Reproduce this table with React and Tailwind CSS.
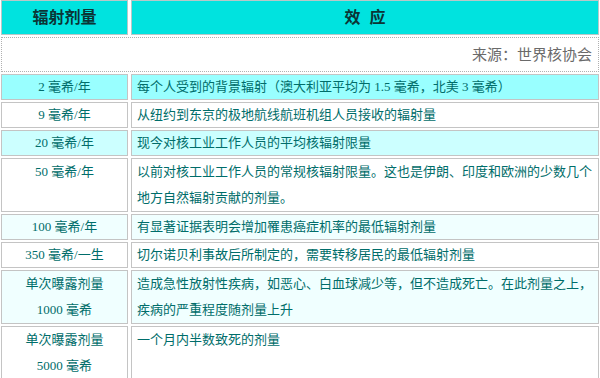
import React from 'react';

const rows = [
  { dose: ['2 毫希/年'], effect: ['每个人受到的背景辐射（澳大利亚平均为 1.5 毫希，北美 3 毫希）'], bg: 'bg-[#99ffff]' },
  { dose: ['9 毫希/年'], effect: ['从纽约到东京的极地航线航班机组人员接收的辐射量'], bg: 'bg-white' },
  { dose: ['20 毫希/年'], effect: ['现今对核工业工作人员的平均核辐射限量'], bg: 'bg-[#ccffff]' },
  {
    dose: ['50 毫希/年'],
    effect: ['以前对核工业工作人员的常规核辐射限量。这也是伊朗、印度和欧洲的少数几个', '地方自然辐射贡献的剂量。'],
    bg: 'bg-white',
  },
  { dose: ['100 毫希/年'], effect: ['有显著证据表明会增加罹患癌症机率的最低辐射剂量'], bg: 'bg-[#f0ffff]' },
  { dose: ['350 毫希/一生'], effect: ['切尔诺贝利事故后所制定的，需要转移居民的最低辐射剂量'], bg: 'bg-white' },
  {
    dose: ['单次曝露剂量', '1000 毫希'],
    effect: ['造成急性放射性疾病，如恶心、白血球减少等，但不造成死亡。在此剂量之上，', '疾病的严重程度随剂量上升'],
    bg: 'bg-[#f0ffff]',
  },
  { dose: ['单次曝露剂量', '5000 毫希'], effect: ['一个月内半数致死的剂量'], bg: 'bg-white' },
];

export default function App() {
  return (
    <div className="w-[600px] h-[378px] overflow-hidden bg-white font-['Liberation_Serif','Noto_Sans_CJK_SC',serif] text-[#006d6a]">
      <table className="-mt-[2px] -ml-[2px] w-[604px] border-separate border-spacing-x-[3px] border-spacing-y-[2px] table-fixed">
        <colgroup>
          <col className="w-[127px]" />
          <col />
        </colgroup>
        <tbody>
          <tr>
            <td className="h-[35px] bg-[#00e3df] border border-[#b8c8c8] text-center text-[16px] font-bold text-[#0b3535]">
              辐射剂量
            </td>
            <td className="h-[35px] bg-[#00e3df] border border-[#b8c8c8] text-center text-[16px] font-bold text-[#0b3535]">
              效<span className="inline-block w-[9px]" />应
            </td>
          </tr>
          <tr>
            <td colSpan={2} className="h-[35px] border border-dotted border-[#b0b0b0] text-right pr-[6px] pt-[2px] text-[15px] text-[#6a6a6a]">
              来源：世界核协会
            </td>
          </tr>
          {rows.map((r, i) => {
            const multi = r.dose.length > 1 || r.effect.length > 1;
            return (
              <tr key={i} className={multi ? 'leading-[26px]' : 'leading-[24px]'}>
                <td className={`${r.bg} border border-[#c4c4c4] text-center align-top text-[13px]`}>
                  {r.dose.map((d, j) => (
                    <div key={j}>{d}</div>
                  ))}
                </td>
                <td className={`${r.bg} border border-[#c4c4c4] align-top pl-[5px] text-[13px] whitespace-nowrap`}>
                  {r.effect.map((e, j) => (
                    <div key={j}>{e}</div>
                  ))}
                </td>
              </tr>
            );
          })}
        </tbody>
      </table>
    </div>
  );
}
